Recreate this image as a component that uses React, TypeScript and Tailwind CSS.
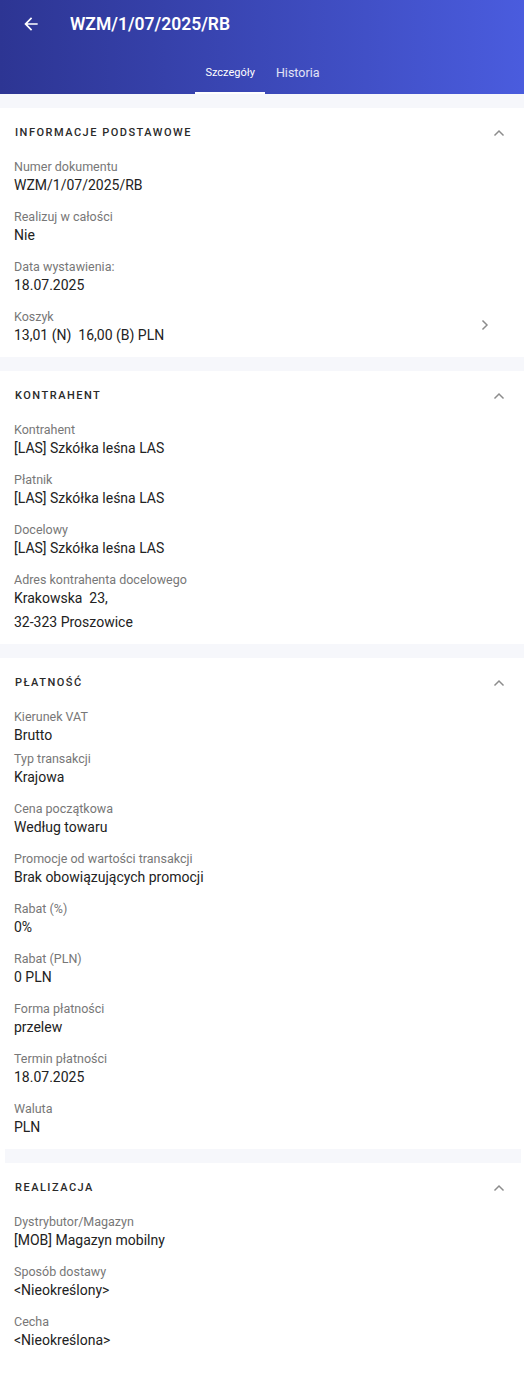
import React from "react";

type Field = { label: string; value: string[]; tight?: boolean; link?: boolean };
type Section = { title: string; fields: Field[] };

const sections: Section[] = [
  {
    title: "Informacje podstawowe",
    fields: [
      { label: "Numer dokumentu", value: ["WZM/1/07/2025/RB"] },
      { label: "Realizuj w całości", value: ["Nie"] },
      { label: "Data wystawienia:", value: ["18.07.2025"] },
      { label: "Koszyk", value: ["13,01 (N)  16,00 (B) PLN"], link: true },
    ],
  },
  {
    title: "Kontrahent",
    fields: [
      { label: "Kontrahent", value: ["[LAS] Szkółka leśna LAS"] },
      { label: "Płatnik", value: ["[LAS] Szkółka leśna LAS"] },
      { label: "Docelowy", value: ["[LAS] Szkółka leśna LAS"] },
      { label: "Adres kontrahenta docelowego", value: ["Krakowska  23,", "32-323 Proszowice"] },
    ],
  },
  {
    title: "Płatność",
    fields: [
      { label: "Kierunek VAT", value: ["Brutto"], tight: true },
      { label: "Typ transakcji", value: ["Krajowa"] },
      { label: "Cena początkowa", value: ["Według towaru"] },
      { label: "Promocje od wartości transakcji", value: ["Brak obowiązujących promocji"] },
      { label: "Rabat (%)", value: ["0%"] },
      { label: "Rabat (PLN)", value: ["0 PLN"] },
      { label: "Forma płatności", value: ["przelew"] },
      { label: "Termin płatności", value: ["18.07.2025"] },
      { label: "Waluta", value: ["PLN"] },
    ],
  },
  {
    title: "Realizacja",
    fields: [
      { label: "Dystrybutor/Magazyn", value: ["[MOB] Magazyn mobilny"] },
      { label: "Sposób dostawy", value: ["<Nieokreślony>"] },
      { label: "Cecha", value: ["<Nieokreślona>"] },
    ],
  },
];

function ChevronUp() {
  return (
    <svg width="16" height="16" viewBox="0 0 24 24" fill="none" stroke="#8c8c8c" strokeWidth="2.2" strokeLinecap="square">
      <path d="M6 15l6-6 6 6" />
    </svg>
  );
}

function ChevronRight() {
  return (
    <svg width="16" height="16" viewBox="0 0 24 24" fill="none" stroke="#8c8c8c" strokeWidth="2.2" strokeLinecap="square">
      <path d="M9 6l6 6-6 6" />
    </svg>
  );
}

function FieldRow({ field }: { field: Field }) {
  return (
    <div className={`flex items-start justify-between pl-[14px] pr-[31px] pt-[1px] ${field.tight ? "pb-[5px]" : "pb-[13px]"}`}>
      <div>
        <div className="text-[12.5px] leading-[18px] text-[#777]">{field.label}</div>
        {field.value.map((v, i) => (
          <div key={i} className={`text-[14px] leading-[18px] text-[#222] whitespace-pre ${i > 0 ? "mt-[6px]" : ""}`}>
            {v}
          </div>
        ))}
      </div>
      {field.link && (
        <div className="mt-[9px]">
          <ChevronRight />
        </div>
      )}
    </div>
  );
}

export default function App() {
  return (
    <div className="w-[524px] min-h-[1388px] bg-white font-['Roboto',sans-serif]">
      <header className="h-[94px] bg-gradient-to-r from-[#2d3593] to-[#4a5cde] text-white">
        <div className="h-[48px] flex items-center">
          <div className="w-[70px] flex justify-center pl-[2px] pr-[10px]">
            <svg width="20" height="20" viewBox="0 0 24 24" fill="white">
              <path d="M20 11H7.83l5.59-5.59L12 4l-8 8 8 8 1.41-1.41L7.83 13H20v-2z" />
            </svg>
          </div>
          <h1 className="text-[17.5px] font-semibold">WZM/1/07/2025/RB</h1>
        </div>
        <nav className="h-[46px] flex justify-center">
          <div className="flex pl-[2px]">
            <div className="relative flex items-center px-[10px] pt-[4px] text-[11px] text-white">
              Szczegóły
              <span className="absolute bottom-0 left-0 right-0 h-[2px] bg-white" />
            </div>
            <div className="flex items-center px-[11px] pt-[4px] text-[12.5px] text-white/85">Historia</div>
          </div>
        </nav>
      </header>

      {sections.map((s, idx) => (
        <React.Fragment key={s.title}>
          {idx === 3 ? (
            <div className="pl-[5px] pr-[3px]">
              <div className="h-[14px] bg-[#f6f7fb]" />
            </div>
          ) : (
            <div className="h-[14px] bg-[#f6f7fb]" />
          )}
          <section>
            <div className="h-[48px] flex items-center justify-between pl-[15px] pr-[17px] pt-[2px]">
              <h2 className="text-[11px] font-medium uppercase tracking-[1.5px] text-[#2a2a2a]">{s.title}</h2>
              <ChevronUp />
            </div>
            <div className="pt-[1px]">
              {s.fields.map((f) => (
                <FieldRow key={f.label} field={f} />
              ))}
            </div>
          </section>
        </React.Fragment>
      ))}
    </div>
  );
}
